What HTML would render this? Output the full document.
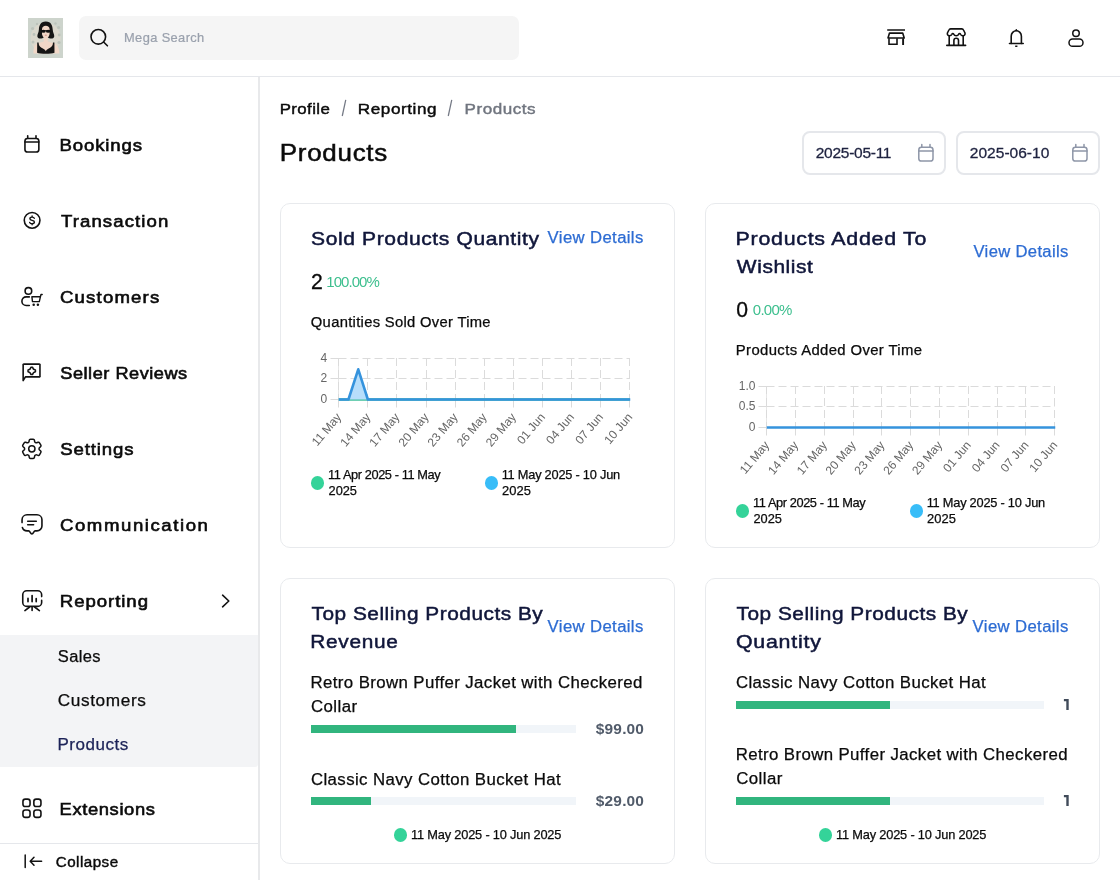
<!DOCTYPE html>
<html lang="en"><head><meta charset="utf-8"><title>Products - Reporting</title>
<style>
*{box-sizing:border-box;margin:0;padding:0}
html,body{width:1120px;height:880px;overflow:hidden;background:#fff}
body{position:relative;font-family:"Liberation Sans",sans-serif;color:#121212}
.t{position:absolute;white-space:nowrap;display:block;transform-origin:0 0}
.abs{position:absolute}
header{position:absolute;left:0;top:0;width:1120px;height:77px;border-bottom:1px solid #e5e7eb;background:#fff}
.search{position:absolute;left:79px;top:16px;width:440px;height:44px;border-radius:7px;background:#f5f5f5}
nav{position:absolute;left:0;top:77px;width:260px;height:803px;border-right:2px solid #e8e9eb;background:#fff}
.sub{position:absolute;left:0;top:634.5px;width:258px;height:132.5px;background:#f3f4f6;border-radius:0 0 3px 0}
.collapse{position:absolute;left:0;top:843px;width:258px;height:37px;border-top:1px solid #e5e7eb;background:#fff}
.card{position:absolute;border:1px solid #e8eaed;border-radius:10px;background:#fff}
.date{position:absolute;top:131px;width:144px;height:44px;border:2px solid #e5e7eb;border-radius:8px;background:#fff}
.track{position:absolute;height:8px;background:#f1f5f9}
.fill{position:absolute;left:0;top:0;height:8px;background:#31b57e}
.dot{position:absolute;width:13px;height:13.6px;border-radius:50%}
svg{position:absolute;overflow:visible}
#wrap{position:absolute;left:0;top:0;width:1120px;height:880px;will-change:transform}
</style></head><body><div id="wrap">

<header>
<svg style="left:28px;top:18px" width="35" height="40" viewBox="28 18 35 40" ><rect x="28" y="18" width="35" height="40" fill="#cdd4cc"/>
<ellipse cx="45.6" cy="38" rx="15" ry="15.5" fill="#dbd8cd"/>
<g fill="#bcc3bb"><circle cx="32.6" cy="28.5" r="1.6"/><circle cx="34" cy="34.5" r="1.4"/><circle cx="33" cy="42" r="1.5"/><circle cx="58.6" cy="27.5" r="1.5"/><circle cx="59.2" cy="35" r="1.4"/><circle cx="59" cy="42.5" r="1.6"/><circle cx="37" cy="24" r="1.2"/><circle cx="55.5" cy="23.5" r="1.2"/></g>
<path d="M33.5 53.4 C33.3 47 35 43.4 39.6 42.8 L44 41.4 L47.7 41.4 L52 42.8 C56.6 43.4 59.2 47 59.4 53.4 Z" fill="#f1d7c7"/>
<path d="M45.8 21.4 C40.2 21.4 39.1 25.8 38.9 29.6 C38.8 32.8 37 34.6 37.4 36.8 C38 39.2 42.2 38.9 43.6 37.6 L48 37.6 C49.4 38.9 53.6 39.2 54.2 36.8 C54.6 34.6 52.8 32.8 52.7 29.6 C52.5 25.8 51.4 21.4 45.8 21.4 Z" fill="#151515"/>
<path d="M42 29.4 C42 27 43.6 25.7 45.8 25.7 C48 25.7 49.6 27 49.6 29.4 L49.6 33.6 C49.6 36.2 47.5 38.5 45.8 38.5 C44.1 38.5 42 36.2 42 33.6 Z" fill="#f1d7c7"/>
<rect x="43.8" y="37" width="4" height="5.4" fill="#f1d7c7"/>
<ellipse cx="43.4" cy="31.3" rx="2.3" ry="1.55" fill="#111"/><ellipse cx="48.2" cy="31.3" rx="2.3" ry="1.55" fill="#111"/><rect x="41" y="30.2" width="9.6" height="0.9" fill="#111"/>
<rect x="44.8" y="34.7" width="2" height="0.9" rx="0.4" fill="#c8766c"/>
<path d="M37.2 42.6 L38.6 42.6 C38.8 45.5 39.5 46.8 41.5 47.7 C43.5 48.5 45 49.5 45.8 51.2 C46.6 49.5 48.1 48.5 50.1 47.7 C52.1 46.8 52.8 45.5 53 42.6 L54.4 42.6 L54.5 52.8 C51 54.2 40.6 54.2 37.1 52.8 Z" fill="#151515"/></svg>
<div class="search"></div>
<svg style="left:88px;top:26px" width="24" height="24" viewBox="88 26 24 24" ><circle cx="98.3" cy="36.8" r="7.3" fill="none" stroke="#121212" stroke-width="1.6" stroke-linecap="round" stroke-linejoin="round"/><path d="M103.6 42 L107.4 45.8" fill="none" stroke="#121212" stroke-width="1.6" stroke-linecap="round" stroke-linejoin="round"/></svg>
<span class="t" style="left:124px;top:33px;font-size:11.9px;line-height:11.9px;color:#9aa1ad;letter-spacing:0.346px;transform:translate(0.04px,0) scaleX(1.0813);-webkit-text-stroke:0.2px #9aa1ad;">Mega Search</span>
<svg style="left:884px;top:25px" width="24" height="24" viewBox="884 25 24 24" ><path d="M887.2 30 H905" fill="none" stroke="#121212" stroke-width="1.5"/>
<path d="M889.5 33.1 H902.7 L904.2 38 H888 Z" fill="none" stroke="#121212" stroke-width="1.6" stroke-linejoin="round"/>
<path d="M889 38.3 V44.2 H897 V38.3" fill="none" stroke="#121212" stroke-width="1.6"/>
<path d="M903.1 38.3 V45" fill="none" stroke="#121212" stroke-width="1.9"/></svg>
<svg style="left:944px;top:25px" width="24" height="24" viewBox="944 25 24 24" ><path d="M950.6 28.9 H961.8 C962.6 28.9 963.2 29.3 963.5 30 L965 33 C965.4 34.6 964.3 35.8 962.9 35.8 C961.8 35.8 960.9 35.1 960.5 34.2 C960.2 33.4 959.1 33.4 958.7 34.2 C958.3 35.1 957.3 35.8 956.2 35.8 C955.1 35.8 954.1 35.1 953.7 34.2 C953.3 33.4 952.2 33.4 951.9 34.2 C951.5 35.1 950.6 35.8 949.5 35.8 C948.1 35.8 947 34.6 947.4 33 L948.9 30 C949.2 29.3 949.8 28.9 950.6 28.9 Z" fill="none" stroke="#121212" stroke-width="1.6" stroke-linecap="round" stroke-linejoin="round"/>
<path d="M949.2 36 V45.3 M963.2 36 V45.3 M946.8 45.4 H965.6" fill="none" stroke="#121212" stroke-width="1.6" stroke-linecap="round" stroke-linejoin="round"/>
<path d="M953.9 45.2 V40.6 A2.3 2.3 0 0 1 958.5 40.6 V45.2" fill="none" stroke="#121212" stroke-width="1.6" stroke-linecap="round" stroke-linejoin="round"/></svg>
<svg style="left:1004px;top:25px" width="24" height="24" viewBox="1004 25 24 24" ><path d="M1011.2 43.4 V36.2 A5.1 5.4 0 0 1 1021.4 36.2 V43.4" fill="none" stroke="#121212" stroke-width="1.6" stroke-linecap="round" stroke-linejoin="round"/>
<path d="M1009.5 43.5 H1023.2" fill="none" stroke="#121212" stroke-width="1.6" stroke-linecap="round" stroke-linejoin="round"/>
<path d="M1015.3 30.6 L1016.3 29.2 L1017.3 30.6 Z" fill="#121212" stroke="#121212" stroke-width="0.8" stroke-linejoin="round"/>
<rect x="1015.1" y="45.4" width="2.4" height="1.5" rx="0.4" fill="#121212"/></svg>
<svg style="left:1064px;top:25px" width="24" height="24" viewBox="1064 25 24 24" ><circle cx="1076" cy="33.2" r="3.25" fill="none" stroke="#121212" stroke-width="1.5" stroke-linecap="round" stroke-linejoin="round"/><rect x="1069" y="39.05" width="14" height="7.2" rx="3.6" fill="none" stroke="#121212" stroke-width="1.5" stroke-linecap="round" stroke-linejoin="round"/></svg>
</header>
<nav></nav>
<div class="sub"></div>
<span class="t" style="left:59px;top:138px;font-size:16.6px;line-height:16.6px;color:#0b0b0b;letter-spacing:0.766px;transform:translate(0.51px,0) scaleX(1.1200);-webkit-text-stroke:0.6px #0b0b0b;">Bookings</span>
<span class="t" style="left:60px;top:214px;font-size:16.6px;line-height:16.6px;color:#0b0b0b;letter-spacing:0.988px;transform:translate(0.89px,0) scaleX(1.1200);-webkit-text-stroke:0.6px #0b0b0b;">Transaction</span>
<span class="t" style="left:59px;top:290px;font-size:16.6px;line-height:16.6px;color:#0b0b0b;letter-spacing:1.050px;transform:translate(0.97px,0) scaleX(1.1200);-webkit-text-stroke:0.6px #0b0b0b;">Customers</span>
<span class="t" style="left:60px;top:366px;font-size:16.6px;line-height:16.6px;color:#0b0b0b;letter-spacing:0.477px;transform:translate(0.28px,0) scaleX(1.0939);-webkit-text-stroke:0.6px #0b0b0b;">Seller Reviews</span>
<span class="t" style="left:60px;top:442px;font-size:16.6px;line-height:16.6px;color:#0b0b0b;letter-spacing:0.782px;transform:translate(0.26px,0) scaleX(1.1200);-webkit-text-stroke:0.6px #0b0b0b;">Settings</span>
<span class="t" style="left:59px;top:518px;font-size:16.6px;line-height:16.6px;color:#0b0b0b;letter-spacing:1.403px;transform:translate(0.97px,0) scaleX(1.1200);-webkit-text-stroke:0.6px #0b0b0b;">Communication</span>
<span class="t" style="left:59px;top:594px;font-size:16.6px;line-height:16.6px;color:#0b0b0b;letter-spacing:0.848px;transform:translate(0.78px,0) scaleX(1.1200);-webkit-text-stroke:0.6px #0b0b0b;">Reporting</span>
<span class="t" style="left:59px;top:802px;font-size:16.6px;line-height:16.6px;color:#0b0b0b;letter-spacing:0.561px;transform:translate(0.60px,0) scaleX(1.1056);-webkit-text-stroke:0.6px #0b0b0b;">Extensions</span>
<span class="t" style="left:57px;top:649px;font-size:15.6px;line-height:15.6px;color:#0b0b0b;letter-spacing:0.340px;transform:translate(0.78px,0) scaleX(1.0572);-webkit-text-stroke:0.25px #0b0b0b;">Sales</span>
<span class="t" style="left:57px;top:693px;font-size:15.6px;line-height:15.6px;color:#0b0b0b;letter-spacing:0.574px;transform:translate(0.66px,0) scaleX(1.1026);-webkit-text-stroke:0.25px #0b0b0b;">Customers</span>
<span class="t" style="left:57px;top:737px;font-size:15.6px;line-height:15.6px;color:#1c2358;letter-spacing:0.473px;transform:translate(0.42px,0) scaleX(1.0908);-webkit-text-stroke:0.25px #1c2358;">Products</span>
<svg style="left:20px;top:132px" width="24" height="24" viewBox="20 132 24 24" ><rect x="24.95" y="138.5" width="13.9" height="13.5" rx="2.6" fill="none" stroke="#121212" stroke-width="1.6" stroke-linecap="round" stroke-linejoin="round"/><path d="M24.95 142 H38.85 M27.7 135.8 V138.3 M36 135.8 V138.3" fill="none" stroke="#121212" stroke-width="1.6" stroke-linecap="round" stroke-linejoin="round"/></svg>
<svg style="left:20px;top:208px" width="24" height="24" viewBox="20 208 24 24" ><circle cx="32.1" cy="220.35" r="7.85" fill="none" stroke="#121212" stroke-width="1.6" stroke-linecap="round" stroke-linejoin="round"/>
<path d="M34.3 218.3 C34 217.5 33.2 217.1 32.1 217.1 C30.8 217.1 29.9 217.8 29.9 218.7 C29.9 219.7 30.8 220.1 32.1 220.35 C33.5 220.6 34.4 221.1 34.4 222.1 C34.4 223 33.4 223.7 32.1 223.7 C30.9 223.7 30 223.2 29.7 222.4 M32.1 216 V217 M32.1 223.8 V224.8" fill="none" stroke="#121212" stroke-width="1.4" stroke-linecap="round" stroke-linejoin="round"/></svg>
<svg style="left:20px;top:286px" width="24" height="22" viewBox="20 286 24 22" ><circle cx="28.4" cy="290.9" r="3.3" fill="none" stroke="#121212" stroke-width="1.6" stroke-linecap="round" stroke-linejoin="round"/>
<path d="M29.3 296.9 H26.2 A4.3 4.3 0 0 0 26.2 305.5 H29.3" fill="none" stroke="#121212" stroke-width="1.6" stroke-linecap="round" stroke-linejoin="round"/>
<path d="M42.2 294.5 H41 L40.4 296.8 M31.9 296.8 H40.4 L39.3 301.6 H32.5 Z" fill="none" stroke="#121212" stroke-width="1.4" stroke-linecap="round" stroke-linejoin="round"/>
<circle cx="33.7" cy="304.8" r="1.25" fill="#121212"/><circle cx="37.9" cy="304.8" r="1.25" fill="#121212"/></svg>
<svg style="left:20px;top:362px" width="24" height="22" viewBox="20 362 24 22" ><path d="M23.15 380.6 V365.2 A0.8 0.8 0 0 1 24.25 364.1 H38.85 A0.8 0.8 0 0 1 39.95 365.2 V375.8 A0.8 0.8 0 0 1 38.85 376.9 H25.4 Z" fill="none" stroke="#121212" stroke-width="1.6" stroke-linecap="round" stroke-linejoin="round"/>
<g transform="translate(31.75 370.85)"><path d="M-0.8 -3.7 H0.8 Q1.2 -1.2 3.7 -0.8 V0.8 Q1.2 1.2 0.8 3.7 H-0.8 Q-1.2 1.2 -3.7 0.8 V-0.8 Q-1.2 -1.2 -0.8 -3.7 Z" fill="none" stroke="#121212" stroke-width="1.5" stroke-linecap="round" stroke-linejoin="round"/></g></svg>
<svg style="left:19.46px;top:435.96px" width="25.68" height="25.68" viewBox="0 0 24 24"><path d="M9.594 3.94c.09-.542.56-.94 1.11-.94h2.593c.55 0 1.02.398 1.11.94l.213 1.281c.063.374.313.686.645.87.074.04.147.083.22.127.325.196.72.257 1.075.124l1.217-.456a1.125 1.125 0 0 1 1.37.49l1.296 2.247a1.125 1.125 0 0 1-.26 1.431l-1.003.827c-.293.241-.438.613-.43.992a7.723 7.723 0 0 1 0 .255c-.008.378.137.75.43.991l1.004.827c.424.35.534.955.26 1.43l-1.298 2.247a1.125 1.125 0 0 1-1.369.491l-1.217-.456c-.355-.133-.75-.072-1.076.124a6.47 6.47 0 0 1-.22.128c-.331.183-.581.495-.644.869l-.213 1.281c-.09.543-.56.94-1.11.94h-2.594c-.55 0-1.019-.398-1.11-.94l-.213-1.281c-.062-.374-.312-.686-.644-.87a6.52 6.52 0 0 1-.22-.127c-.325-.196-.72-.257-1.076-.124l-1.217.456a1.125 1.125 0 0 1-1.369-.49l-1.297-2.247a1.125 1.125 0 0 1 .26-1.431l1.004-.827c.292-.24.437-.613.43-.991a6.932 6.932 0 0 1 0-.255c.007-.38-.138-.751-.43-.992l-1.004-.827a1.125 1.125 0 0 1-.26-1.430l1.297-2.247a1.125 1.125 0 0 1 1.37-.491l1.216.456c.356.133.751.072 1.076-.124.072-.044.146-.086.22-.128.332-.183.582-.495.644-.869l.214-1.280Z" fill="none" stroke="#121212" stroke-width="1.4018691588785046" stroke-linecap="round" stroke-linejoin="round"/><circle cx="12" cy="12" r="2.94" fill="none" stroke="#121212" stroke-width="1.4018691588785046" stroke-linecap="round" stroke-linejoin="round"/></svg>
<svg style="left:20px;top:512px" width="24" height="24" viewBox="20 512 24 24" ><path d="M22.05 522.6 V519.7 A5 5 0 0 1 27.05 514.75 H36.95 A5 5 0 0 1 41.95 519.7 V525.9 A5 5 0 0 1 36.95 530.9 H35.2 C33.6 530.9 33.6 534 31.9 534 C30.2 534 30.2 530.9 28.6 530.9 H27.05 C24.8 530.9 23 529.6 22.4 527.6" fill="none" stroke="#121212" stroke-width="1.6" stroke-linecap="round" stroke-linejoin="round"/>
<path d="M27.7 521.2 H36.3 M27.7 524.7 H33.6" fill="none" stroke="#121212" stroke-width="1.6" stroke-linecap="round" stroke-linejoin="round"/></svg>
<svg style="left:20px;top:588px" width="24" height="24" viewBox="20 588 24 24" ><path d="M41.65 596.6 V594.8 A4 4 0 0 0 37.65 590.8 H26.75 A4 4 0 0 0 22.75 594.8 V602.4 A4 4 0 0 0 26.75 606.4 H37.65 A4 4 0 0 0 41.65 602.4 V600.4" fill="none" stroke="#121212" stroke-width="1.6" stroke-linecap="round" stroke-linejoin="round"/>
<path d="M28 598.4 V601.6 M32.1 595.5 V601.6 M36.2 598.6 V601.6" fill="none" stroke="#121212" stroke-width="1.7" stroke-linecap="round" stroke-linejoin="round"/>
<path d="M32.1 606.8 V610.4 M29.6 607 L24.9 610.6 M34.6 607 L39.4 610.6" fill="none" stroke="#121212" stroke-width="1.6" stroke-linecap="round" stroke-linejoin="round"/></svg>
<svg style="left:20px;top:796px" width="24" height="24" viewBox="20 796 24 24" ><rect x="22.95" y="799.15" width="7.1" height="7.4" rx="2.3" fill="none" stroke="#121212" stroke-width="1.6" stroke-linecap="round" stroke-linejoin="round"/><rect x="22.95" y="810.0" width="7.1" height="7.4" rx="2.3" fill="none" stroke="#121212" stroke-width="1.6" stroke-linecap="round" stroke-linejoin="round"/><rect x="33.85" y="799.15" width="7.1" height="7.4" rx="2.3" fill="none" stroke="#121212" stroke-width="1.6" stroke-linecap="round" stroke-linejoin="round"/><rect x="33.85" y="810.0" width="7.1" height="7.4" rx="2.3" fill="none" stroke="#121212" stroke-width="1.6" stroke-linecap="round" stroke-linejoin="round"/></svg>
<svg style="left:218px;top:592px" width="14" height="18" viewBox="218 592 14 18" ><path d="M222.6 595.2 L228.8 601 L222.6 606.8" fill="none" stroke="#121212" stroke-width="1.6" stroke-linecap="round" stroke-linejoin="round"/></svg>
<div class="collapse"></div>
<svg style="left:22px;top:852px" width="24" height="18" viewBox="22 852 24 18" ><path d="M25.2 855 V867.4 M41.6 861.2 H30.4 M34 857.2 L30.2 861.2 L34 865.2" fill="none" stroke="#121212" stroke-width="1.5" stroke-linecap="round" stroke-linejoin="round"/></svg>
<span class="t" style="left:55px;top:856px;font-size:13.8px;line-height:13.8px;color:#0b0b0b;letter-spacing:0.443px;transform:translate(0.74px,0) scaleX(1.0973);-webkit-text-stroke:0.4px #0b0b0b;">Collapse</span>
<span class="t" style="left:279px;top:101px;font-size:15.5px;line-height:15.5px;color:#0b0b0b;letter-spacing:0.373px;transform:translate(0.64px,0) scaleX(1.0869);-webkit-text-stroke:0.45px #0b0b0b;">Profile</span>
<svg style="left:339.55px;top:98px" width="8" height="20" viewBox="339.55 98 8 20" ><path d="M341.8 116 L345.3 99.8" fill="none" stroke="#747985" stroke-width="1.25"/></svg>
<span class="t" style="left:357px;top:101px;font-size:15.5px;line-height:15.5px;color:#0b0b0b;letter-spacing:0.512px;transform:translate(0.84px,0) scaleX(1.1044);-webkit-text-stroke:0.45px #0b0b0b;">Reporting</span>
<svg style="left:446.0px;top:98px" width="8" height="20" viewBox="446.0 98 8 20" ><path d="M448.25 116 L451.75 99.8" fill="none" stroke="#747985" stroke-width="1.25"/></svg>
<span class="t" style="left:464px;top:101px;font-size:15.5px;line-height:15.5px;color:#70757f;letter-spacing:0.506px;transform:translate(0.54px,0) scaleX(1.0983);-webkit-text-stroke:0.45px #70757f;">Products</span>
<span class="t" style="left:279px;top:141px;font-size:24.0px;line-height:24.0px;color:#0b0b0b;letter-spacing:0.657px;transform:translate(0.84px,0) scaleX(1.0812);-webkit-text-stroke:0.5px #0b0b0b;">Products</span>
<div class="date" style="left:802px"></div>
<span class="t" style="left:815px;top:145px;font-size:15.5px;line-height:15.5px;color:#1f2340;letter-spacing:-0.268px;transform:translate(0.77px,0) scaleX(1.0000);-webkit-text-stroke:0.3px #1f2340;">2025-05-11</span>
<svg style="left:918.2px;top:142px" width="18" height="22" viewBox="918.2 142 18 22" ><rect x="919.0" y="147.3" width="14.2" height="13.8" rx="2.6" fill="none" stroke="#8e96a8" stroke-width="1.5" stroke-linecap="round" stroke-linejoin="round"/><path d="M919.0 151 H933.2 M922.0 144.6 V147 M930.2 144.6 V147" fill="none" stroke="#8e96a8" stroke-width="1.5" stroke-linecap="round" stroke-linejoin="round"/></svg>
<div class="date" style="left:956px"></div>
<span class="t" style="left:969px;top:145px;font-size:15.5px;line-height:15.5px;color:#1f2340;letter-spacing:0.012px;transform:translate(0.77px,0) scaleX(1.0022);-webkit-text-stroke:0.3px #1f2340;">2025-06-10</span>
<svg style="left:1072.2px;top:142px" width="18" height="22" viewBox="1072.2 142 18 22" ><rect x="1073.0" y="147.3" width="14.2" height="13.8" rx="2.6" fill="none" stroke="#8e96a8" stroke-width="1.5" stroke-linecap="round" stroke-linejoin="round"/><path d="M1073.0 151 H1087.2 M1076.0 144.6 V147 M1084.2 144.6 V147" fill="none" stroke="#8e96a8" stroke-width="1.5" stroke-linecap="round" stroke-linejoin="round"/></svg>
<div class="card" style="left:280px;top:203px;width:395px;height:345px"></div>
<div class="card" style="left:705px;top:203px;width:395px;height:345px"></div>
<div class="card" style="left:280px;top:578px;width:395px;height:286px"></div>
<div class="card" style="left:705px;top:578px;width:395px;height:286px"></div>
<span class="t" style="left:311px;top:229px;font-size:19.2px;line-height:19.2px;color:#10163a;letter-spacing:0.549px;transform:translate(0.07px,0) scaleX(1.0971);-webkit-text-stroke:0.5px #10163a;">Sold Products Quantity</span>
<span class="t" style="left:547px;top:230px;font-size:15.6px;line-height:15.6px;color:#2d6cd3;letter-spacing:0.344px;transform:translate(0.62px,0) scaleX(1.0715);-webkit-text-stroke:0.25px #2d6cd3;">View Details</span>
<span class="t" style="left:311px;top:271px;font-size:21.2px;line-height:21.2px;color:#0b0b0b;letter-spacing:0.000px;transform:translate(0.09px,0) scaleX(1.0000);-webkit-text-stroke:0.3px #0b0b0b;">2</span>
<span class="t" style="left:326px;top:274px;font-size:15.0px;line-height:15.0px;color:#3dbf8e;letter-spacing:-0.942px;transform:translate(0.26px,0) scaleX(1.0000);">100.00%</span>
<span class="t" style="left:310px;top:316px;font-size:13.8px;line-height:13.8px;color:#0b0b0b;letter-spacing:0.290px;transform:translate(0.83px,0) scaleX(1.0700);-webkit-text-stroke:0.25px #0b0b0b;">Quantities Sold Over Time</span>
<svg style="left:0;top:0" width="1120" height="880" viewBox="0 0 1120 880" font-family="Liberation Sans, sans-serif" font-size="12">
<path d="M338.5 358.5 V399.5 M338.5 399.5 H629.5" stroke="#e6e6e6" stroke-width="1" fill="none"/>
<path d="M330.5 358.5 H338.5" stroke="#dbdbdb" stroke-width="1"/>
<path d="M338.5 358.5 H630.0" stroke="#dbdbdb" stroke-width="1" stroke-dasharray="8 4"/>
<path d="M330.5 378.5 H338.5" stroke="#dbdbdb" stroke-width="1"/>
<path d="M338.5 378.5 H630.0" stroke="#dbdbdb" stroke-width="1" stroke-dasharray="8 4"/>
<path d="M330.5 399.5 H338.5" stroke="#dbdbdb" stroke-width="1"/>
<path d="M338.5 399.5 H630.0" stroke="#dbdbdb" stroke-width="1" stroke-dasharray="8 4"/>
<path d="M338.5 358.0 V399.5" stroke="#dbdbdb" stroke-width="1" stroke-dasharray="8 4"/>
<path d="M338.5 399.5 V407.5" stroke="#dbdbdb" stroke-width="1"/>
<path d="M367.5 358.0 V399.5" stroke="#dbdbdb" stroke-width="1" stroke-dasharray="8 4"/>
<path d="M367.5 399.5 V407.5" stroke="#dbdbdb" stroke-width="1"/>
<path d="M396.5 358.0 V399.5" stroke="#dbdbdb" stroke-width="1" stroke-dasharray="8 4"/>
<path d="M396.5 399.5 V407.5" stroke="#dbdbdb" stroke-width="1"/>
<path d="M426.5 358.0 V399.5" stroke="#dbdbdb" stroke-width="1" stroke-dasharray="8 4"/>
<path d="M426.5 399.5 V407.5" stroke="#dbdbdb" stroke-width="1"/>
<path d="M455.5 358.0 V399.5" stroke="#dbdbdb" stroke-width="1" stroke-dasharray="8 4"/>
<path d="M455.5 399.5 V407.5" stroke="#dbdbdb" stroke-width="1"/>
<path d="M484.5 358.0 V399.5" stroke="#dbdbdb" stroke-width="1" stroke-dasharray="8 4"/>
<path d="M484.5 399.5 V407.5" stroke="#dbdbdb" stroke-width="1"/>
<path d="M513.5 358.0 V399.5" stroke="#dbdbdb" stroke-width="1" stroke-dasharray="8 4"/>
<path d="M513.5 399.5 V407.5" stroke="#dbdbdb" stroke-width="1"/>
<path d="M542.5 358.0 V399.5" stroke="#dbdbdb" stroke-width="1" stroke-dasharray="8 4"/>
<path d="M542.5 399.5 V407.5" stroke="#dbdbdb" stroke-width="1"/>
<path d="M571.5 358.0 V399.5" stroke="#dbdbdb" stroke-width="1" stroke-dasharray="8 4"/>
<path d="M571.5 399.5 V407.5" stroke="#dbdbdb" stroke-width="1"/>
<path d="M600.5 358.0 V399.5" stroke="#dbdbdb" stroke-width="1" stroke-dasharray="8 4"/>
<path d="M600.5 399.5 V407.5" stroke="#dbdbdb" stroke-width="1"/>
<path d="M629.5 358.0 V399.5" stroke="#dbdbdb" stroke-width="1" stroke-dasharray="8 4"/>
<path d="M629.5 399.5 V407.5" stroke="#dbdbdb" stroke-width="1"/>
<text x="327.3" y="362.0" text-anchor="end" fill="#666666">4</text>
<text x="327.3" y="382.0" text-anchor="end" fill="#666666">2</text>
<text x="327.3" y="403.0" text-anchor="end" fill="#666666">0</text>
<text transform="translate(338.75 414.6) rotate(-50)" text-anchor="end" dy="4.2" fill="#666666">11 May</text>
<text transform="translate(367.85 414.6) rotate(-50)" text-anchor="end" dy="4.2" fill="#666666">14 May</text>
<text transform="translate(396.95 414.6) rotate(-50)" text-anchor="end" dy="4.2" fill="#666666">17 May</text>
<text transform="translate(426.05 414.6) rotate(-50)" text-anchor="end" dy="4.2" fill="#666666">20 May</text>
<text transform="translate(455.15 414.6) rotate(-50)" text-anchor="end" dy="4.2" fill="#666666">23 May</text>
<text transform="translate(484.25 414.6) rotate(-50)" text-anchor="end" dy="4.2" fill="#666666">26 May</text>
<text transform="translate(513.35 414.6) rotate(-50)" text-anchor="end" dy="4.2" fill="#666666">29 May</text>
<text transform="translate(542.45 414.6) rotate(-50)" text-anchor="end" dy="4.2" fill="#666666">01 Jun</text>
<text transform="translate(571.55 414.6) rotate(-50)" text-anchor="end" dy="4.2" fill="#666666">04 Jun</text>
<text transform="translate(600.65 414.6) rotate(-50)" text-anchor="end" dy="4.2" fill="#666666">07 Jun</text>
<text transform="translate(629.75 414.6) rotate(-50)" text-anchor="end" dy="4.2" fill="#666666">10 Jun</text>
<path d="M338.75 399.5 H629.75" stroke="#3fbf9a" stroke-width="2.6"/>
<path d="M348.45 399.5 L358.25 369.3 L367.85 399.5 Z" fill="#b7defb"/>
<path d="M338.75 399.5 L348.45 399.5 L358.25 369.3 L367.85 399.5 L630.25 399.5" fill="none" stroke="#3593dd" stroke-width="2.6" stroke-linejoin="round"/>
</svg>
<div class="dot" style="left:311px;top:476.2px;background:#34d399"></div>
<div class="dot" style="left:485.2px;top:476.2px;background:#38bdf8"></div>
<span class="t" style="left:328px;top:469px;font-size:12.8px;line-height:12.8px;color:#0b0b0b;letter-spacing:-0.413px;transform:translate(0.05px,0) scaleX(1.0000);-webkit-text-stroke:0.25px #0b0b0b;">11 Apr 2025 - 11 May</span>
<span class="t" style="left:328px;top:485px;font-size:12.8px;line-height:12.8px;color:#0b0b0b;letter-spacing:-0.051px;transform:translate(0.56px,0) scaleX(1.0000);-webkit-text-stroke:0.25px #0b0b0b;">2025</span>
<span class="t" style="left:501px;top:469px;font-size:12.8px;line-height:12.8px;color:#0b0b0b;letter-spacing:-0.228px;transform:translate(0.65px,0) scaleX(1.0000);-webkit-text-stroke:0.25px #0b0b0b;">11 May 2025 - 10 Jun</span>
<span class="t" style="left:501px;top:485px;font-size:12.8px;line-height:12.8px;color:#0b0b0b;letter-spacing:0.059px;transform:translate(0.98px,0) scaleX(1.0098);-webkit-text-stroke:0.25px #0b0b0b;">2025</span>
<span class="t" style="left:735px;top:229px;font-size:19.2px;line-height:19.2px;color:#10163a;letter-spacing:0.670px;transform:translate(0.54px,0) scaleX(1.1130);-webkit-text-stroke:0.5px #10163a;">Products Added To</span>
<span class="t" style="left:736px;top:257px;font-size:19.2px;line-height:19.2px;color:#10163a;letter-spacing:0.517px;transform:translate(0.87px,0) scaleX(1.0898);-webkit-text-stroke:0.5px #10163a;">Wishlist</span>
<span class="t" style="left:973px;top:244px;font-size:15.6px;line-height:15.6px;color:#2d6cd3;letter-spacing:0.315px;transform:translate(0.49px,0) scaleX(1.0652);-webkit-text-stroke:0.25px #2d6cd3;">View Details</span>
<span class="t" style="left:736px;top:299px;font-size:21.2px;line-height:21.2px;color:#0b0b0b;letter-spacing:0.000px;transform:translate(0.14px,0) scaleX(1.0000);-webkit-text-stroke:0.3px #0b0b0b;">0</span>
<span class="t" style="left:752px;top:302px;font-size:15.0px;line-height:15.0px;color:#3dbf8e;letter-spacing:-0.729px;transform:translate(0.81px,0) scaleX(1.0000);">0.00%</span>
<span class="t" style="left:735px;top:344px;font-size:13.8px;line-height:13.8px;color:#0b0b0b;letter-spacing:0.342px;transform:translate(0.81px,0) scaleX(1.0779);-webkit-text-stroke:0.25px #0b0b0b;">Products Added Over Time</span>
<svg style="left:0;top:0" width="1120" height="880" viewBox="0 0 1120 880" font-family="Liberation Sans, sans-serif" font-size="12">
<path d="M766.5 386.5 V427.5 M766.5 427.5 H1054.5" stroke="#e6e6e6" stroke-width="1" fill="none"/>
<path d="M758.5 386.5 H766.5" stroke="#dbdbdb" stroke-width="1"/>
<path d="M766.5 386.5 H1055.0" stroke="#dbdbdb" stroke-width="1" stroke-dasharray="8 4"/>
<path d="M758.5 406.5 H766.5" stroke="#dbdbdb" stroke-width="1"/>
<path d="M766.5 406.5 H1055.0" stroke="#dbdbdb" stroke-width="1" stroke-dasharray="8 4"/>
<path d="M758.5 427.5 H766.5" stroke="#dbdbdb" stroke-width="1"/>
<path d="M766.5 427.5 H1055.0" stroke="#dbdbdb" stroke-width="1" stroke-dasharray="8 4"/>
<path d="M766.5 386.0 V427.5" stroke="#dbdbdb" stroke-width="1" stroke-dasharray="8 4"/>
<path d="M766.5 427.5 V435.5" stroke="#dbdbdb" stroke-width="1"/>
<path d="M795.5 386.0 V427.5" stroke="#dbdbdb" stroke-width="1" stroke-dasharray="8 4"/>
<path d="M795.5 427.5 V435.5" stroke="#dbdbdb" stroke-width="1"/>
<path d="M824.5 386.0 V427.5" stroke="#dbdbdb" stroke-width="1" stroke-dasharray="8 4"/>
<path d="M824.5 427.5 V435.5" stroke="#dbdbdb" stroke-width="1"/>
<path d="M853.5 386.0 V427.5" stroke="#dbdbdb" stroke-width="1" stroke-dasharray="8 4"/>
<path d="M853.5 427.5 V435.5" stroke="#dbdbdb" stroke-width="1"/>
<path d="M881.5 386.0 V427.5" stroke="#dbdbdb" stroke-width="1" stroke-dasharray="8 4"/>
<path d="M881.5 427.5 V435.5" stroke="#dbdbdb" stroke-width="1"/>
<path d="M910.5 386.0 V427.5" stroke="#dbdbdb" stroke-width="1" stroke-dasharray="8 4"/>
<path d="M910.5 427.5 V435.5" stroke="#dbdbdb" stroke-width="1"/>
<path d="M939.5 386.0 V427.5" stroke="#dbdbdb" stroke-width="1" stroke-dasharray="8 4"/>
<path d="M939.5 427.5 V435.5" stroke="#dbdbdb" stroke-width="1"/>
<path d="M968.5 386.0 V427.5" stroke="#dbdbdb" stroke-width="1" stroke-dasharray="8 4"/>
<path d="M968.5 427.5 V435.5" stroke="#dbdbdb" stroke-width="1"/>
<path d="M997.5 386.0 V427.5" stroke="#dbdbdb" stroke-width="1" stroke-dasharray="8 4"/>
<path d="M997.5 427.5 V435.5" stroke="#dbdbdb" stroke-width="1"/>
<path d="M1025.5 386.0 V427.5" stroke="#dbdbdb" stroke-width="1" stroke-dasharray="8 4"/>
<path d="M1025.5 427.5 V435.5" stroke="#dbdbdb" stroke-width="1"/>
<path d="M1054.5 386.0 V427.5" stroke="#dbdbdb" stroke-width="1" stroke-dasharray="8 4"/>
<path d="M1054.5 427.5 V435.5" stroke="#dbdbdb" stroke-width="1"/>
<text x="755.4" y="390.0" text-anchor="end" fill="#666666">1.0</text>
<text x="755.4" y="410.0" text-anchor="end" fill="#666666">0.5</text>
<text x="755.4" y="431.0" text-anchor="end" fill="#666666">0</text>
<text transform="translate(766.75 442.6) rotate(-50)" text-anchor="end" dy="4.2" fill="#666666">11 May</text>
<text transform="translate(795.55 442.6) rotate(-50)" text-anchor="end" dy="4.2" fill="#666666">14 May</text>
<text transform="translate(824.35 442.6) rotate(-50)" text-anchor="end" dy="4.2" fill="#666666">17 May</text>
<text transform="translate(853.15 442.6) rotate(-50)" text-anchor="end" dy="4.2" fill="#666666">20 May</text>
<text transform="translate(881.95 442.6) rotate(-50)" text-anchor="end" dy="4.2" fill="#666666">23 May</text>
<text transform="translate(910.75 442.6) rotate(-50)" text-anchor="end" dy="4.2" fill="#666666">26 May</text>
<text transform="translate(939.55 442.6) rotate(-50)" text-anchor="end" dy="4.2" fill="#666666">29 May</text>
<text transform="translate(968.35 442.6) rotate(-50)" text-anchor="end" dy="4.2" fill="#666666">01 Jun</text>
<text transform="translate(997.15 442.6) rotate(-50)" text-anchor="end" dy="4.2" fill="#666666">04 Jun</text>
<text transform="translate(1025.95 442.6) rotate(-50)" text-anchor="end" dy="4.2" fill="#666666">07 Jun</text>
<text transform="translate(1054.75 442.6) rotate(-50)" text-anchor="end" dy="4.2" fill="#666666">10 Jun</text>
<path d="M766.75 427.5 H1055.25" fill="none" stroke="#3593dd" stroke-width="2.6"/>
</svg>
<div class="dot" style="left:736px;top:504.2px;background:#34d399"></div>
<div class="dot" style="left:910.2px;top:504.2px;background:#38bdf8"></div>
<span class="t" style="left:753px;top:497px;font-size:12.8px;line-height:12.8px;color:#0b0b0b;letter-spacing:-0.413px;transform:translate(0.05px,0) scaleX(1.0000);-webkit-text-stroke:0.25px #0b0b0b;">11 Apr 2025 - 11 May</span>
<span class="t" style="left:753px;top:513px;font-size:12.8px;line-height:12.8px;color:#0b0b0b;letter-spacing:-0.051px;transform:translate(0.55px,0) scaleX(1.0000);-webkit-text-stroke:0.25px #0b0b0b;">2025</span>
<span class="t" style="left:926px;top:497px;font-size:12.8px;line-height:12.8px;color:#0b0b0b;letter-spacing:-0.228px;transform:translate(0.65px,0) scaleX(1.0000);-webkit-text-stroke:0.25px #0b0b0b;">11 May 2025 - 10 Jun</span>
<span class="t" style="left:926px;top:513px;font-size:12.8px;line-height:12.8px;color:#0b0b0b;letter-spacing:0.059px;transform:translate(0.98px,0) scaleX(1.0098);-webkit-text-stroke:0.25px #0b0b0b;">2025</span>
<span class="t" style="left:311px;top:604px;font-size:19.2px;line-height:19.2px;color:#10163a;letter-spacing:0.479px;transform:translate(0.50px,0) scaleX(1.0848);-webkit-text-stroke:0.5px #10163a;">Top Selling Products By</span>
<span class="t" style="left:310px;top:632px;font-size:19.2px;line-height:19.2px;color:#10163a;letter-spacing:0.649px;transform:translate(0.30px,0) scaleX(1.0851);-webkit-text-stroke:0.5px #10163a;">Revenue</span>
<span class="t" style="left:547px;top:619px;font-size:15.6px;line-height:15.6px;color:#2d6cd3;letter-spacing:0.344px;transform:translate(0.62px,0) scaleX(1.0715);-webkit-text-stroke:0.25px #2d6cd3;">View Details</span>
<span class="t" style="left:310px;top:675px;font-size:15.6px;line-height:15.6px;color:#0b0b0b;letter-spacing:0.363px;transform:translate(0.48px,0) scaleX(1.0786);-webkit-text-stroke:0.25px #0b0b0b;">Retro Brown Puffer Jacket with Checkered</span>
<span class="t" style="left:310px;top:699px;font-size:15.6px;line-height:15.6px;color:#0b0b0b;letter-spacing:0.395px;transform:translate(0.93px,0) scaleX(1.0806);-webkit-text-stroke:0.25px #0b0b0b;">Collar</span>
<div class="track" style="left:311px;top:725px;width:265px"><div class="fill" style="width:205px"></div></div>
<span class="t" style="left:595px;top:721px;font-size:15.0px;line-height:15.0px;color:#515b6a;letter-spacing:0.173px;transform:translate(0.83px,0) scaleX(1.0296);font-weight:700;">$99.00</span>
<span class="t" style="left:310px;top:772px;font-size:15.6px;line-height:15.6px;color:#0b0b0b;letter-spacing:0.367px;transform:translate(0.93px,0) scaleX(1.0781);-webkit-text-stroke:0.25px #0b0b0b;">Classic Navy Cotton Bucket Hat</span>
<div class="track" style="left:311px;top:797px;width:265px"><div class="fill" style="width:60px"></div></div>
<span class="t" style="left:595px;top:793px;font-size:15.0px;line-height:15.0px;color:#515b6a;letter-spacing:0.173px;transform:translate(0.83px,0) scaleX(1.0296);font-weight:700;">$29.00</span>
<div class="dot" style="left:394px;top:828px;background:#34d399"></div><span class="t" style="left:411px;top:829px;font-size:12.8px;line-height:12.8px;color:#0b0b0b;letter-spacing:-0.189px;transform:translate(0.05px,0) scaleX(1.0000);-webkit-text-stroke:0.25px #0b0b0b;">11 May 2025 - 10 Jun 2025</span>
<span class="t" style="left:736px;top:604px;font-size:19.2px;line-height:19.2px;color:#10163a;letter-spacing:0.479px;transform:translate(0.50px,0) scaleX(1.0848);-webkit-text-stroke:0.5px #10163a;">Top Selling Products By</span>
<span class="t" style="left:735px;top:632px;font-size:19.2px;line-height:19.2px;color:#10163a;letter-spacing:0.689px;transform:translate(0.90px,0) scaleX(1.1143);-webkit-text-stroke:0.5px #10163a;">Quantity</span>
<span class="t" style="left:972px;top:619px;font-size:15.6px;line-height:15.6px;color:#2d6cd3;letter-spacing:0.344px;transform:translate(0.62px,0) scaleX(1.0715);-webkit-text-stroke:0.25px #2d6cd3;">View Details</span>
<span class="t" style="left:735px;top:675px;font-size:15.6px;line-height:15.6px;color:#0b0b0b;letter-spacing:0.367px;transform:translate(0.93px,0) scaleX(1.0781);-webkit-text-stroke:0.25px #0b0b0b;">Classic Navy Cotton Bucket Hat</span>
<div class="track" style="left:736px;top:701px;width:308px"><div class="fill" style="width:154px"></div></div>
<svg style="left:1060px;top:697px" width="12" height="16" viewBox="1060 697 12 16"><title>1</title><path d="M1063.9 699 H1068.7 V709.9 H1066.3 V701.2 H1063.9 Z" fill="#414b5a"/></svg>
<span class="t" style="left:735px;top:747px;font-size:15.6px;line-height:15.6px;color:#0b0b0b;letter-spacing:0.363px;transform:translate(0.65px,0) scaleX(1.0786);-webkit-text-stroke:0.25px #0b0b0b;">Retro Brown Puffer Jacket with Checkered</span>
<span class="t" style="left:736px;top:771px;font-size:15.6px;line-height:15.6px;color:#0b0b0b;letter-spacing:0.395px;transform:translate(0.18px,0) scaleX(1.0806);-webkit-text-stroke:0.25px #0b0b0b;">Collar</span>
<div class="track" style="left:736px;top:797px;width:308px"><div class="fill" style="width:154px"></div></div>
<svg style="left:1060px;top:793px" width="12" height="16" viewBox="1060 793 12 16"><title>1</title><path d="M1063.9 795 H1068.7 V805.9 H1066.3 V797.2 H1063.9 Z" fill="#414b5a"/></svg>
<div class="dot" style="left:819px;top:828px;background:#34d399"></div><span class="t" style="left:836px;top:829px;font-size:12.8px;line-height:12.8px;color:#0b0b0b;letter-spacing:-0.189px;transform:translate(0.05px,0) scaleX(1.0000);-webkit-text-stroke:0.25px #0b0b0b;">11 May 2025 - 10 Jun 2025</span>
</div></body></html>
